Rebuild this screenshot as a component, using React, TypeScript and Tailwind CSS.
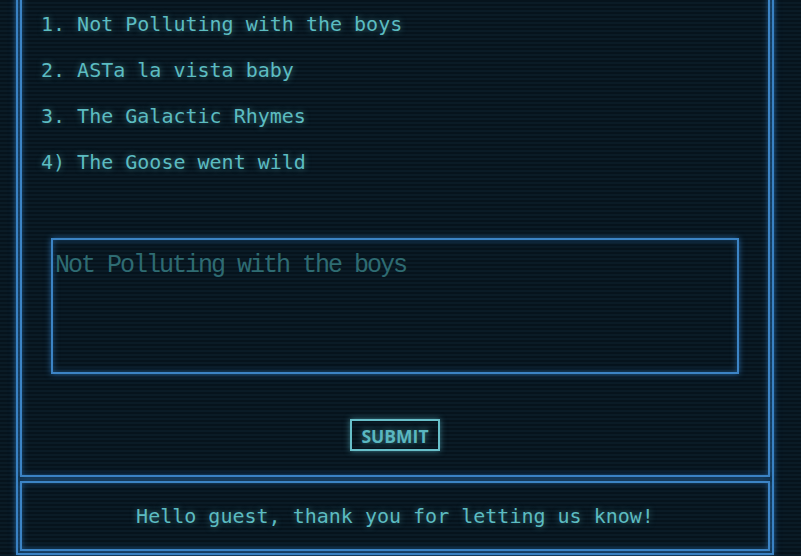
const items = [
  "1. Not Polluting with the boys",
  "2. ASTa la vista baby",
  "3. The Galactic Rhymes",
  "4) The Goose went wild",
];

const glowBox =
  "border-[#3c84c5] shadow-[0_0_6px_rgba(45,120,190,0.75),inset_0_0_6px_rgba(45,120,190,0.55)]";

export default function App() {
  return (
    <div className="h-[556px] overflow-hidden bg-[#071620] bg-[repeating-linear-gradient(180deg,#06131c_0px,#06131c_2px,#0a1b26_2px,#0a1b26_4px)] font-['DejaVu_Sans_Mono',monospace] text-[#5cbcc1]">
      <div className={`-mt-[30px] ml-[16px] w-[758px] border-2 p-[2px] pb-[1px] ${glowBox}`}>
        <div className={`border-2 pt-[25px] pb-[24px] ${glowBox}`}>
          <ul className="pl-[19px] text-[20px] leading-[46px] [text-shadow:0_0_6px_rgba(97,195,200,0.5)]">
            {items.map((t) => (
              <li key={t} className="whitespace-pre">
                {t}
              </li>
            ))}
          </ul>
          <div className="mx-[29px] mt-[53px]">
            <textarea
              placeholder="Not Polluting with the boys"
              className={`block h-[136px] w-full resize-none border-2 bg-transparent px-[2px] pt-[12px] font-['Liberation_Mono',monospace] text-[25px] leading-[28px] tracking-[-2px] text-[#5cbcc1] outline-none placeholder:text-[#2e6b72] ${glowBox}`}
            />
          </div>
          <div className="mt-[45px] flex justify-center">
            <button className="h-[32px] w-[90px] border-2 border-[#68bfc9] pt-[2px] font-['Open_Sans',sans-serif] text-[17.5px] font-bold text-[#5ab7c0] shadow-[0_0_6px_rgba(90,185,200,0.6)] [text-shadow:0_0_6px_rgba(97,195,200,0.6)]">
              SUBMIT
            </button>
          </div>
        </div>
        <div className={`mt-[4px] flex h-[70px] items-center justify-center border-2 text-[20px] [text-shadow:0_0_6px_rgba(97,195,200,0.5)] ${glowBox}`}>
          Hello guest, thank you for letting us know!
        </div>
        <div className="h-[1px]" />
      </div>
    </div>
  );
}
